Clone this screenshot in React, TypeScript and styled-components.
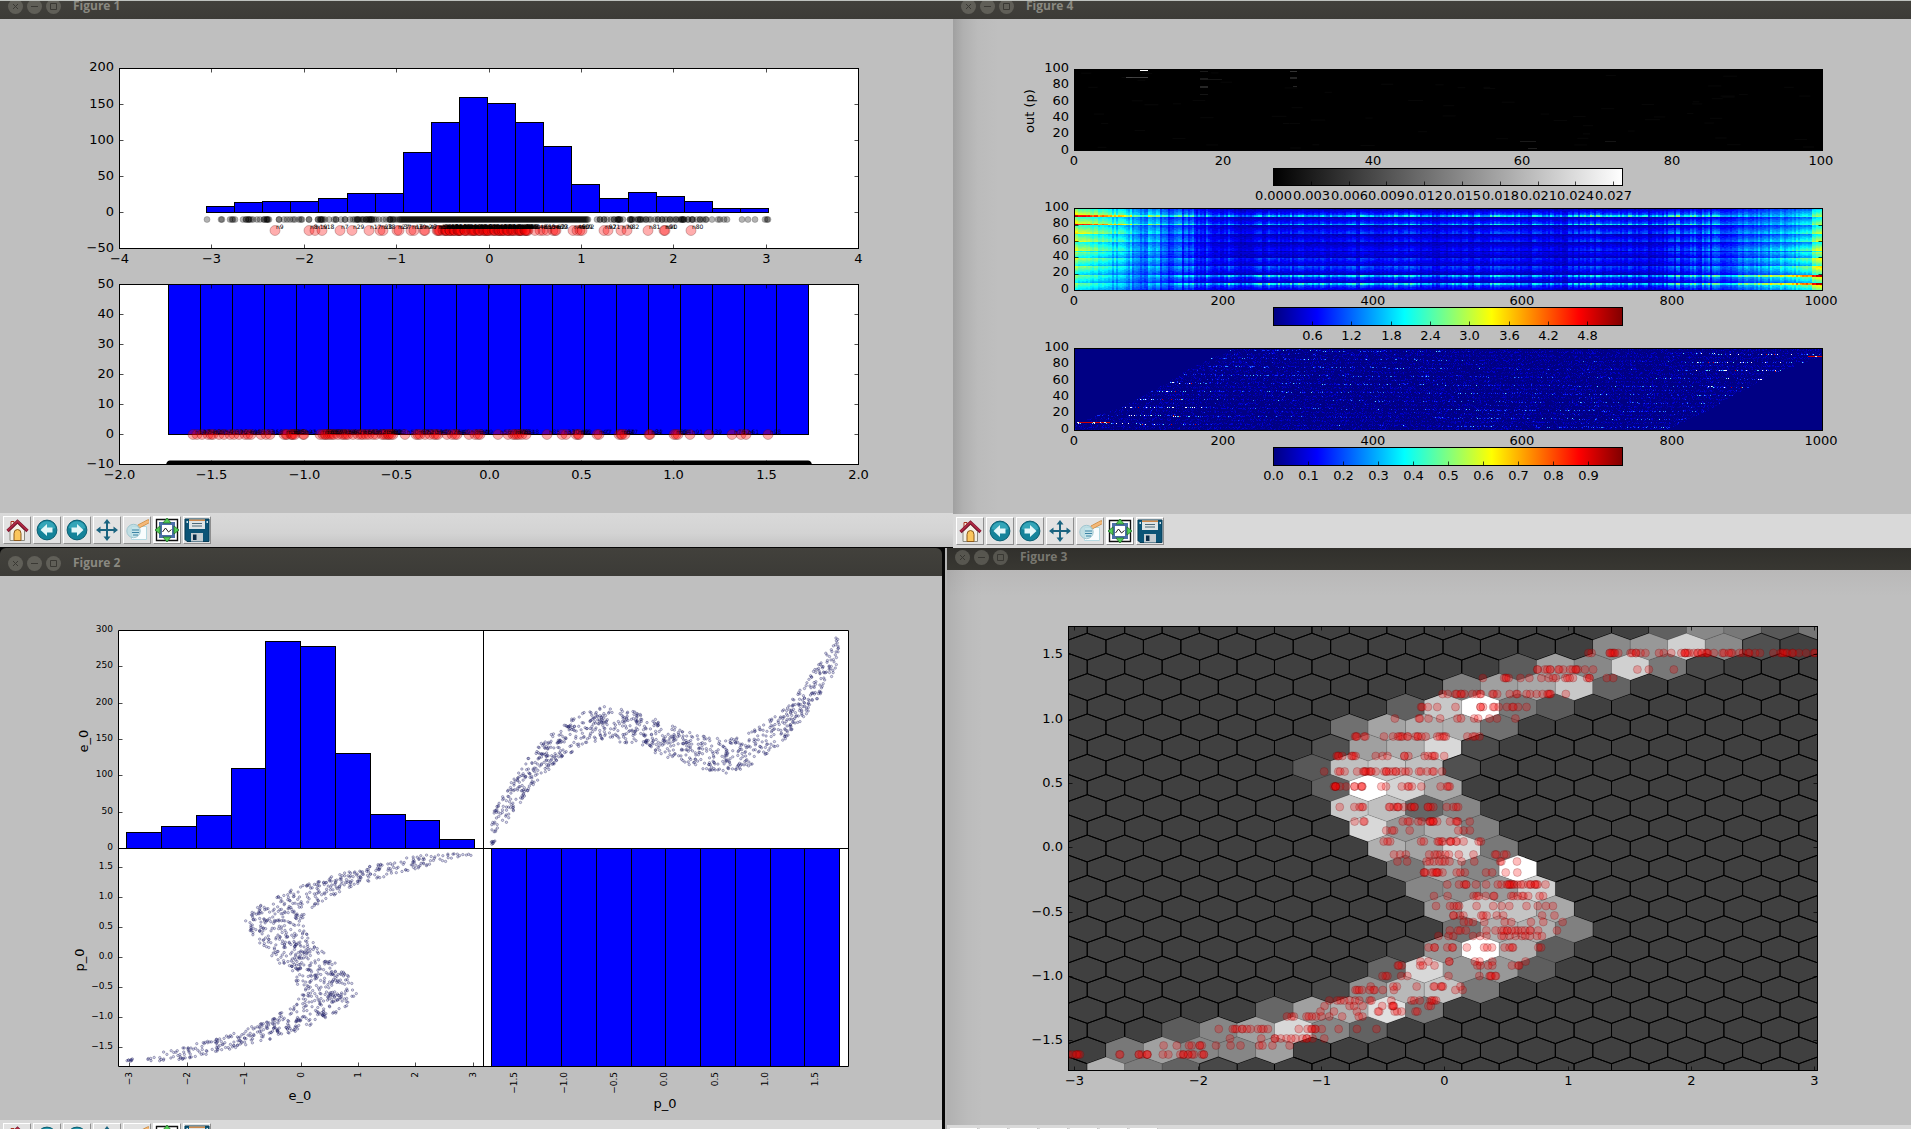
import React from 'react';
import styled, { createGlobalStyle } from 'styled-components';

const GlobalStyle = createGlobalStyle`
  * { box-sizing: border-box; }
  body { margin: 0; background: #000; overflow: hidden; }
`;

const Desktop = styled.main`
  display: flex;
  flex-direction: column;
  height: 100vh;
  overflow: hidden;
  background: #060606;
  font-family: 'DejaVu Sans', sans-serif;
`;

const TopRow = styled.div`
  display: grid;
  grid-template-columns: 953fr 958fr;
  align-items: start;
  flex: none;
  border-top: 1px solid #bfc3bf;
`;

const BottomRow = styled.div`
  display: grid;
  grid-template-columns: 942fr 966fr;
  align-items: start;
  gap: 3px;
  flex: 1;
  min-height: 0;
  overflow: hidden;
`;

const Frame = styled.section<{ $inset?: boolean }>`
  min-width: 0;
  padding-left: ${(p) => (p.$inset ? '2px' : '0')};
  background: ${(p) => (p.$inset ? '#b4b4b4' : 'transparent')};
`;

const TitleBar = styled.header<{ $height: number; $dim?: boolean; $round?: boolean }>`
  display: flex;
  align-items: flex-end;
  height: ${(p) => p.$height}px;
  overflow: hidden;
  border-radius: ${(p) => (p.$round ? '6px 6px 0 0' : '0')};
  background: ${(p) => (p.$dim ? 'linear-gradient(#31302c, #383732)' : 'linear-gradient(#42413c, #3c3b37)')};
`;

const TitleContent = styled.div<{ $dim?: boolean }>`
  display: flex;
  flex: none;
  align-items: center;
  gap: 4px;
  height: 26px;
  padding-left: 8px;
  opacity: ${(p) => (p.$dim ? 0.8 : 1)};
`;

const WindowButton = styled.button`
  display: block;
  width: 15px;
  height: 15px;
  padding: 0;
  border: 0;
  border-radius: 50%;
  background: #605f58;
  svg { display: block; }
`;

const Title = styled.h2`
  margin: 0 0 0 8px;
  font: 700 12px/16px 'Open Sans', sans-serif;
  color: #8a8981;
`;

type Shade = 'none' | 'left' | 'corner';
const shades: Record<Shade, string> = {
  none: '#bfbfbf',
  left: 'linear-gradient(90deg, #a0a0a0, #b0b0b0 10px, #bbb 25px, #bfbfbf 45px)',
  corner:
    'linear-gradient(90deg, rgba(0,0,0,.08), rgba(0,0,0,.02) 20px, transparent 36px), linear-gradient(#b9b8b8, #bfbfbf 26px)',
};

const Plot = styled.svg<{ $shade: Shade }>`
  display: block;
  width: 100%;
  height: auto;
  background: ${(p) => shades[p.$shade]};
  font-family: 'DejaVu Sans', sans-serif;
  font-size: 13px;
`;

const Toolbar = styled.div<{ $shadow?: boolean }>`
  display: flex;
  gap: 2px;
  height: 34px;
  padding: 3px;
  background: ${(p) => (p.$shadow ? 'linear-gradient(#d9d9d9, #d3d3d3 60%, #c4c4c4)' : '#d9d9d9')};
`;

const ToolButton = styled.button`
  display: flex;
  align-items: center;
  justify-content: center;
  width: 28px;
  height: 28px;
  padding: 0;
  border: 1px solid;
  border-color: #fff #8e8e8e #8e8e8e #fff;
  background: #e2e2e2;
  svg { flex: none; }
`;

/* ---------- numeric helpers ---------- */

function makeRandom(seed: number) {
  let s = seed;
  return () => {
    s = (s + 0x6d2b79f5) | 0;
    let t = Math.imul(s ^ (s >>> 15), 1 | s);
    t = (t + Math.imul(t ^ (t >>> 7), 61 | t)) ^ t;
    return ((t ^ (t >>> 14)) >>> 0) / 4294967296;
  };
}
const clamp = (v: number, lo = 0, hi = 1) => Math.max(lo, Math.min(hi, v));
const range = (n: number) => Array.from({ length: n }, (_, i) => i);

const LEVELS = 48;
function jet(v: number) {
  const c = (k: number) => Math.round(255 * clamp(1.5 - Math.abs(4 * v - k)));
  return `rgb(${c(3)},${c(2)},${c(1)})`;
}

/* ---------- manifold samples ---------- */

const CURVE = [[0, 0], [0.3, -0.32], [0.6, -0.5], [0.8, -0.34], [1, 0], [1.2, 0.5], [1.35, 0.98], [1.5, 1.6], [1.6, 2.05], [1.74, 2.7]];
function curve(p: number): number {
  const a = Math.abs(p);
  for (let i = 1; i < CURVE.length; i++) {
    const [x0, y0] = CURVE[i - 1];
    const [x1, y1] = CURVE[i];
    if (a <= x1) return Math.sign(p) * (y0 + ((y1 - y0) * (a - x0)) / (x1 - x0));
  }
  return 0;
}
const sampleRandom = makeRandom(11);
const SAMPLES = range(1000).map(() => {
  const p = (sampleRandom() * 2 - 1) * 1.73;
  const e = curve(p) + (sampleRandom() * 2 - 1) * 0.49;
  return { p, e: clamp(e, -3.05, 3.03) };
});

/* ---------- shared chart parts ---------- */

interface TickProps { at: number[]; labels: string[]; pos: number; size?: number }
const XLabels = ({ at, labels, pos, size = 13 }: TickProps) => (
  <g textAnchor="middle" fontSize={size}>
    {labels.map((l, i) => <text key={i} x={at[i]} y={pos}>{l}</text>)}
  </g>
);
const YLabels = ({ at, labels, pos, size = 13 }: TickProps) => (
  <g textAnchor="end" fontSize={size}>
    {labels.map((l, i) => <text key={i} x={pos} y={at[i] + (size > 10 ? 4 : 2)}>{l}</text>)}
  </g>
);
const UprightLabels = ({ at, labels, pos, size = 9 }: TickProps) => (
  <g textAnchor="end" fontSize={size}>
    {labels.map((l, i) => <text key={i} transform={`translate(${at[i] + 3} ${pos}) rotate(-90)`}>{l}</text>)}
  </g>
);
interface MarksProps { xs: number[]; ys: number[]; x0: number; x1: number; y0: number; y1: number; sides?: string }
const Marks = ({ xs, ys, x0, x1, y0, y1, sides = 'tblr' }: MarksProps) => {
  let d = '';
  xs.forEach((x) => {
    if (sides.includes('t')) d += `M${x} ${y0}v4`;
    if (sides.includes('b')) d += `M${x} ${y1}v-4`;
  });
  ys.forEach((y) => {
    if (sides.includes('l')) d += `M${x0} ${y}h4`;
    if (sides.includes('r')) d += `M${x1} ${y}h-4`;
  });
  return <path d={d} stroke="#000" strokeOpacity={0.7} fill="none" />;
};
const Bars = ({ edges, tops, base }: { edges: number[]; tops: number[]; base: number }) => (
  <g fill="#00f" stroke="#000">
    {tops.map((t, i) => <rect key={i} x={edges[i]} y={t} width={edges[i + 1] - edges[i]} height={base - t} />)}
  </g>
);

/* ---------- Figure 1 ---------- */

const HIST_TOPS = [206.5, 202.5, 201.5, 201.5, 198.5, 193.5, 193.5, 152.5, 122.5, 97.5, 103.5, 122.5, 146.5, 184.5, 198.5, 192.5, 196.5, 201.5, 208.5, 208.5];
const HIST_EDGES = range(21).map((i) => 206.5 + Math.round(i * 28.1));
const UNIFORM_EDGES = range(21).map((i) => 168.5 + i * 32);
const BLACK_LEFT = [207, 221, 222, 230, 232, 233, 235, 243, 246, 248, 249, 251, 253, 257, 260, 264, 266, 267, 268, 269, 279, 284, 287, 290, 293, 295, 299, 301, 302, 309, 318, 320, 321, 322, 323, 325, 329, 334, 336, 341, 345, 350, 353, 355, 357, 358, 359, 361, 363, 366, 367, 369, 370, 371, 372, 374, 376, 379, 383, 386, 389, 390, 391, 393, 395, 397];
const BLACK_RIGHT = [597, 600, 604, 607, 611, 614, 617, 618, 619, 620, 623, 630, 631, 632, 635, 638, 640, 641, 643, 646, 649, 651, 655, 658, 662, 665, 667, 670, 673, 676, 679, 681, 682, 683, 684, 688, 692, 693, 697, 700, 703, 706, 712, 718, 720, 724, 727, 742, 748, 755, 765, 767, 768];
const BLACK_DOTS = [...BLACK_LEFT, ...BLACK_LEFT.filter((x) => x > 245 && x % 3 === 0), ...range(190).map((i) => 399 + i), ...BLACK_RIGHT, ...BLACK_RIGHT.filter((x) => x < 710 && x % 2 === 0)];
const RED_SPARSE: [number, string][] = [[275, 'n9'], [309, 'n8'], [315, 'n19'], [322, 'n18'], [340, 'n7'], [352, 'n29'], [369, 'n17'], [380, 'n28'], [383, 'n38'], [397, 'n27'], [399, 'n37'], [411, 'n16'], [414, 'n39'], [424, 'n26'], [425, 'n47'], [573, 'n49'], [577, 'n60'], [580, 'n59'], [582, 'n72'], [604, 'n92'], [608, 'n71'], [621, 'n70'], [627, 'n82'], [648, 'n81'], [664, 'n91'], [665, 'n90'], [691, 'n80']];
const denseRandom = makeRandom(4);
const RED_DENSE: [number, string][] = range(74).map((i) => [435 + Math.round(i * 1.2) + Math.round(denseRandom() * 5), `n${10 + Math.floor(denseRandom() * 89)}`]);
const RED_UPPER: [number, string][] = [...RED_SPARSE, ...RED_DENSE, [525, 'n45'], [526, 'n58'], [527, 'n63'], [540, 'n61'], [543, 'n50'], [547, 'n54'], [553, 'n52'], [555, 'n69'], [556, 'n73'], [535, 'n48']];
const RED_LOWER = [193, 197, 202, 208, 211, 213, 219, 224, 230, 234, 239, 245, 248, 251, 261, 266, 270, 284, 286, 287, 291, 292, 293, 295, 303, 304, 320, 323, 325, 326, 328, 330, 332, 334, 338, 342, 344, 346, 348, 353, 358, 361, 363, 366, 369, 373, 376, 382, 384, 386, 388, 389, 391, 393, 405, 416, 418, 420, 425, 430, 434, 436, 438, 447, 452, 455, 457, 469, 475, 478, 480, 498, 508, 513, 515, 517, 519, 522, 526, 547, 562, 566, 576, 578, 579, 597, 599, 619, 621, 622, 625, 649, 650, 674, 676, 678, 690, 709, 732, 741, 746, 768];

const TOP_X = range(9).map((i) => 119.5 + Math.round(i * 92.375));
const FigureOne = () => (
  <Plot $shade="none" viewBox="0 19 953 494" role="img" aria-label="Histogram pair">
    <rect x={119.5} y={68.5} width={739} height={180} fill="#fff" />
    <Bars edges={HIST_EDGES} tops={HIST_TOPS} base={212.5} />
    <g fillOpacity={0.3} stroke="#000" strokeOpacity={0.2}>
      {BLACK_DOTS.map((x, i) => <circle key={i} cx={x} cy={219.5} r={3} />)}
    </g>
    <g fill="#f00" fillOpacity={0.32} stroke="#400" strokeOpacity={0.25}>
      {RED_UPPER.map(([x], i) => <circle key={i} cx={x} cy={230.5} r={5} />)}
    </g>
    <g fontSize={6}>
      {RED_UPPER.map(([x, l], i) => <text key={i} x={x + 1} y={229}>{l}</text>)}
    </g>
    <Marks xs={TOP_X} ys={[104.5, 140.5, 176.5, 212.5]} x0={119.5} x1={858.5} y0={68.5} y1={248.5} />
    <rect x={119.5} y={68.5} width={739} height={180} fill="none" stroke="#000" />
    <XLabels at={TOP_X} labels={['−4', '−3', '−2', '−1', '0', '1', '2', '3', '4']} pos={263} />
    <YLabels at={[67, 104, 140, 176, 212, 248]} labels={['200', '150', '100', '50', '0', '−50']} pos={114} />

    <rect x={119.5} y={284.5} width={739} height={180} fill="#fff" />
    <Bars edges={UNIFORM_EDGES} tops={range(20).map(() => 284.5)} base={434.5} />
    <g fill="#f00" fillOpacity={0.34} stroke="#400" strokeOpacity={0.25}>
      {RED_LOWER.map((x, i) => <circle key={i} cx={x} cy={434.5} r={5} />)}
    </g>
    <g fontSize={6} fillOpacity={0.7}>
      {RED_LOWER.map((x, i) => <text key={i} x={x + 2} y={434}>{`n${10 + ((i * 37) % 89)}`}</text>)}
    </g>
    <path d="M166 464.5q1-4 4-4h638q3 0 4 4z" />
    <Marks xs={TOP_X} ys={[314.5, 344.5, 374.5, 404.5, 434.5]} x0={119.5} x1={858.5} y0={284.5} y1={464.5} />
    <rect x={119.5} y={284.5} width={739} height={180} fill="none" stroke="#000" />
    <XLabels at={TOP_X} labels={['−2.0', '−1.5', '−1.0', '−0.5', '0.0', '0.5', '1.0', '1.5', '2.0']} pos={479} />
    <YLabels at={[284, 314, 344, 374, 404, 434, 464]} labels={['50', '40', '30', '20', '10', '0', '−10']} pos={114} />
  </Plot>
);

/* ---------- Figure 4 ---------- */

interface Layer { color: string; d: string }

function buildActivation(): Layer[] {
  const rnd = makeRandom(7);
  const cols = 374;
  const column = range(cols).map(() => rnd());
  const slow = range(cols).map((c) => 0.5 + 0.5 * Math.sin(c / 5) * Math.sin(c / 13 + 1));
  const paths: string[] = range(LEVELS).map(() => '');
  for (let y = 0; y < 82; y++) {
    const r = ((82 - y - 0.5) / 82) * 100;
    const upper = r > 47;
    let shape = 0;
    let block = 0;
    for (let j = -1; j < 10; j++) {
      const d = r - (8.8 + 10.25 * j);
      const g = upper ? (d >= -0.6 && d < 9 ? 1 - d / 9 : 0) : d <= 1 && d > -9 ? 1 + d / 9 : 0;
      if (g > shape) { shape = Math.min(1, g); block = j; }
    }
    const peak = shape > 0.82 ? 1 : 0;
    let run = -1;
    let start = 0;
    for (let c = 0; c <= cols; c++) {
      let level = -2;
      if (c < cols) {
        const u = c / cols;
        const n = column[c];
        const left = clamp(1 - u / 0.22);
        const right = Math.pow(clamp((u - 0.77) / 0.23), 1.1);
        const depth = 0.08 + 0.62 * clamp(Math.min(u, 1 - u) / 0.16);
        const damp = 1 - depth * n;
        const tiltL = 0.72 + 0.38 * (r / 100);
        const tiltR = 1.08 - 0.35 * (r / 100);
        let v = left * damp * tiltL * (2.2 + 1.2 * shape + (block > 6 && peak ? 1.3 : 0));
        v += right * damp * tiltR * (1.6 + 1.4 * shape + (block < 2 && peak ? 1.5 : 0));
        if (u > 0.985) v += 0.5;
        const mid = clamp((u - 0.08) / 0.15) * clamp((0.95 - u) / 0.15);
        const outer = Math.abs(block - 4) / 4;
        const bias = block < 4 ? 1.15 - 0.4 * u : 0.75 + 0.35 * u;
        const flick = 0.35 + 0.6 * (1 - n) + 0.35 * slow[c];
        v += mid * bias * flick * (0.1 + shape * (0.6 + 0.6 * outer) + (peak && outer > 0.6 ? 0.75 : 0));
        v += 0.15 + 0.14 * rnd();
        level = Math.round(clamp(v / 5.33) * (LEVELS - 1));
      }
      if (level !== run) {
        if (run >= 0) paths[run] += `M${1074 + start * 2} ${209.5 + y}h${(c - start) * 2}`;
        run = level;
        start = c;
      }
    }
  }
  return paths.map((d, i) => ({ color: jet(i / (LEVELS - 1)), d })).filter((l) => l.d);
}

const EDGE_POINTS = [[0, 8], [0.03, 19], [0.06, 28], [0.08, 38], [0.1, 48], [0.125, 60], [0.15, 75], [0.18, 88], [0.21, 101]];
function buildSpikes(): Layer[] {
  const rnd = makeRandom(21);
  const colors = ['#0000a4', '#0000d0', '#1030ff', '#3090ff', '#60e0ff', '#fff', '#d00000'];
  const out = colors.map(() => '');
  const edge = (u: number) => {
    const pts = EDGE_POINTS;
    for (let i = 1; i < pts.length; i++) {
      if (u <= pts[i][0]) return pts[i - 1][1] + ((pts[i][1] - pts[i - 1][1]) * (u - pts[i - 1][0])) / (pts[i][0] - pts[i - 1][0]);
    }
    return 101;
  };
  for (let y = 0; y < 81; y++) {
    for (let x = 0; x < 746; x += 1) {
      const u = x / 746;
      const r = ((81 - y) / 81) * 100;
      if (r > edge(u) || 100 - r > edge(1 - u)) continue;
      const lane = (((r - 8 + u * 7) % 10.2) + 10.2) % 10.2 < 1.3;
      const sub = (((r - 3 + u * 7) % 5.1) + 5.1) % 5.1 < 2.4;
      const margin = Math.min(edge(u) - r, r - (100 - edge(1 - u)));
      const strong = u < 0.5 ? r < 62 : r > 45;
      const nearEdge = strong && (u < 0.17 || u > 0.83) && margin < 32;
      const fade = u < 0.5 ? clamp(r / 70, 0.05, 1) : clamp((100 - r) / 70, 0.05, 1);
      const n = rnd();
      let k = -1;
      if (lane && nearEdge) {
        if (n < 0.03) k = 6;
        else if (n < 0.12) k = 5;
        else if (n < 0.19) k = 4;
        else if (n < 0.34) k = 2;
      } else if (lane) {
        if (n < 0.015 * fade) k = 4;
        else if (n < 0.08 * fade) k = 3;
        else if (n < 0.22 * fade) k = 2;
        else if (n < 0.36) k = 1;
      } else if (sub) {
        if (n < 0.02 * fade) k = 2;
        else if (n < 0.16) k = 1;
        else if (n < 0.4) k = 0;
      } else if (n < 0.04) k = 1;
      else if (n < 0.18) k = 0;
      if (k >= 0) out[k] += `M${1075 + x} ${349.5 + y}h1`;
    }
  }
  return colors.map((color, i) => ({ color, d: out[i] }));
}

const ACTIVATION = buildActivation();
const SPIKES = buildSpikes();
const Layers = ({ layers }: { layers: Layer[] }) => (
  <g fill="none" shapeRendering="crispEdges">
    {layers.map((l) => <path key={l.color} d={l.d} stroke={l.color} />)}
  </g>
);

const MAP_X = range(6).map((i) => 1074 + Math.round(i * 149.4));
const PERCENT = ['100', '80', '60', '40', '20', '0'];
const yTicks = (top: number) => range(6).map((i) => top + Math.round(i * 16.3));
const THOUSAND = ['0', '200', '400', '600', '800', '1000'];
const faintRandom = makeRandom(3);
const FAINT = range(70).map(() => ({ x: 1080 + faintRandom() * 730, y: 72 + faintRandom() * 76, w: 6 + faintRandom() * 9 }));

const ColorBar = ({ y, h, fill, ticks, labels }: { y: number; h: number; fill: string; ticks: number[]; labels: string[] }) => (
  <g>
    <rect x={1273.5} y={y} width={349} height={h} fill={`url(#${fill})`} stroke="#000" />
    <Marks xs={ticks} ys={[]} x0={0} x1={0} y0={y} y1={y + h} sides="b" />
    <XLabels at={ticks} labels={labels} pos={Math.ceil(y + h + 14)} />
  </g>
);

const FigureFour = () => (
  <Plot $shade="left" viewBox="953 19 958 495" role="img" aria-label="Activation maps">
    <defs>
      <linearGradient id="gray"><stop offset="0" stopColor="#000" /><stop offset="1" stopColor="#fff" /></linearGradient>
      <linearGradient id="jet">
        {range(17).map((i) => <stop key={i} offset={i / 16} stopColor={jet(i / 16)} />)}
      </linearGradient>
    </defs>
    <rect x={1074} y={69} width={749} height={82} fill="#000" />
    <g fill="#fff">
      <rect x={1140} y={70} width={8} height={1} />
      <rect x={1126} y={77} width={22} height={1} fillOpacity={0.25} />
      <rect x={1200} y={71} width={8} height={1} fillOpacity={0.1} />
      <rect x={1200} y={78} width={8} height={2} fillOpacity={0.1} />
      <rect x={1208} y={79} width={14} height={1} fillOpacity={0.08} />
      <rect x={1200} y={86} width={8} height={2} fillOpacity={0.15} />
      <rect x={1200} y={94} width={8} height={1} fillOpacity={0.08} />
      <rect x={1290} y={71} width={7} height={1} fillOpacity={0.2} />
      <rect x={1290} y={77} width={7} height={2} fillOpacity={0.14} />
      <rect x={1293} y={86} width={4} height={1} fillOpacity={0.15} />
      <rect x={1520} y={141} width={16} height={1} fillOpacity={0.1} />
      <rect x={1528} y={148} width={9} height={1} fillOpacity={0.12} />
      <rect x={1605} y={141} width={11} height={1} fillOpacity={0.08} />
      {FAINT.map((f, i) => <rect key={i} x={f.x} y={f.y} width={f.w} height={1} fillOpacity={0.03} />)}
    </g>
    <XLabels at={MAP_X} labels={['0', '20', '40', '60', '80', '100']} pos={165} />
    <YLabels at={yTicks(68)} labels={PERCENT} pos={1069} />
    <text textAnchor="middle" transform="translate(1034 111) rotate(-90)">out (p)</text>
    <ColorBar y={168.5} h={17} fill="gray" ticks={range(10).map((i) => 1273.5 + Math.round(i * 37.8))} labels={range(10).map((i) => (i * 0.003).toFixed(3))} />

    <Layers layers={ACTIVATION} />
    <rect x={1074.5} y={208.5} width={748} height={82} fill="none" stroke="#000" />
    <Marks xs={[]} ys={[225.5, 241.5, 257.5, 274.5]} x0={1074.5} x1={1822.5} y0={208.5} y1={290.5} />
    <XLabels at={MAP_X} labels={THOUSAND} pos={305} />
    <YLabels at={yTicks(207)} labels={PERCENT} pos={1069} />
    <ColorBar y={307.5} h={18} fill="jet" ticks={range(8).map((i) => 1312.5 + Math.round(i * 39.3))} labels={range(8).map((i) => ((i + 1) * 0.6).toFixed(1))} />

    <rect x={1074.5} y={348.5} width={748} height={82} fill="#000084" />
    <Layers layers={SPIKES} />
    <path d="M1077 422.5h33M1808 356.5h14" stroke="#d00000" />
    <path d="M1077 422.5h2M1093 422.5h2M1100 422.5h1M1104 422.5h2M1815 356.5h2" stroke="#e8f4e0" />
    <rect x={1074.5} y={348.5} width={748} height={82} fill="none" stroke="#000" />
    <XLabels at={MAP_X} labels={THOUSAND} pos={445} />
    <YLabels at={yTicks(347)} labels={PERCENT} pos={1069} />
    <ColorBar y={447.5} h={18} fill="jet" ticks={range(10).map((i) => 1273.5 + i * 35)} labels={range(10).map((i) => (i / 10).toFixed(1))} />
  </Plot>
);

/* ---------- Figure 2 ---------- */

const PAIR_EDGES = [126.5, 161.5, 196.5, 231.5, 265.5, 300.5, 335.5, 370.5, 405.5, 439.5, 474.5];
const PAIR_TOPS = [832.5, 826.5, 815.5, 768.5, 641.5, 646.5, 753.5, 814.5, 820.5, 839.5];
const PAIR_UNIFORM = [491.5, 526.5, 561.5, 596.5, 631.5, 665.5, 700.5, 735.5, 770.5, 804.5, 839.5];
const E_X = [129.5, 187.5, 244.5, 301.5, 358.5, 415.5, 473.5];
const P_Y = [867, 897, 927, 957, 987, 1017, 1047];
const P_X = [514, 564, 614, 664, 715, 765, 815];
const COUNT_Y = range(7).map((i) => 630 + Math.round(i * 36.3));

const FigureTwo = () => (
  <Plot $shade="none" viewBox="0 576 942 544" role="img" aria-label="Scatter matrix">
    <rect x={118.5} y={630.5} width={730} height={436} fill="#fff" />
    <Bars edges={PAIR_EDGES} tops={PAIR_TOPS} base={848.5} />
    <Bars edges={PAIR_UNIFORM} tops={range(10).map(() => 848.5)} base={1066.5} />
    <g fill="#5a5ac0" fillOpacity={0.25} stroke="#141446" strokeOpacity={0.36} strokeWidth={0.9}>
      {SAMPLES.map((s, i) => <circle key={`a${i}`} cx={301.5 + s.e * 57.2} cy={957.4 - s.p * 60} r={1.2} />)}
      {SAMPLES.map((s, i) => <circle key={`b${i}`} cx={665 + s.p * 100.5} cy={739.6 - s.e * 34.3} r={1.2} />)}
    </g>
    <Marks xs={[]} ys={COUNT_Y.slice(1, 6).map((y) => y + 0.5)} x0={118.5} x1={0} y0={0} y1={0} sides="l" />
    <Marks xs={E_X} ys={P_Y.map((y) => y + 0.5)} x0={118.5} x1={0} y0={0} y1={1066.5} sides="lb" />
    <path d="M118.5 630.5h730v436h-730zM483.5 630.5v436M118.5 848.5h730" fill="none" stroke="#000" />
    <YLabels at={COUNT_Y} labels={['300', '250', '200', '150', '100', '50', '0']} pos={113} size={9} />
    <YLabels at={P_Y} labels={['1.5', '1.0', '0.5', '0.0', '−0.5', '−1.0', '−1.5']} pos={113} size={9} />
    <UprightLabels at={E_X.map((x) => x - 0.5)} labels={['−3', '−2', '−1', '0', '1', '2', '3']} pos={1072} />
    <UprightLabels at={P_X} labels={['−1.5', '−1.0', '−0.5', '0.0', '0.5', '1.0', '1.5']} pos={1072} />
    <g textAnchor="middle">
      <text transform="translate(88 741) rotate(-90)">e_0</text>
      <text transform="translate(84 960) rotate(-90)">p_0</text>
      <text x={300} y={1100}>e_0</text>
      <text x={665} y={1108}>p_0</text>
    </g>
  </Plot>
);

/* ---------- Figure 3 ---------- */

/* Per row from the top: index of the first filled cell, then grey levels. */
const HEX_ROWS: [number, string][] = [
  [16, '60 88 78 58 75'], [14, '8a 98 d0 8a 50 42'], [12, '5c a0 88 d0 78 48'], [10, '80 a0 a8 c8 64'],
  [9, '60 c8 ff 78 5a'], [7, '70 a4 b0 b0 70'], [7, '50 a0 b0 d8 4c'], [6, '58 c0 c8 c0 50'],
  [7, '60 ff d4 a8'], [7, 'c8 c0 66 86'], [8, 'd8 98 b0 80'], [8, 'b0 a4 d8 78'],
  [9, '78 a8 86 ff'], [9, '86 90 9a d0'], [10, '98 c8 c4 a8'], [10, '74 b0 b0 80'],
  [9, '4a 98 ff b0 5e'], [8, '66 d8 98 98 5e'], [7, '4a 90 b8 c4 78'], [5, '66 a0 b0 e0 78'],
  [3, '5c 86 a0 d8 86 62'], [1, '78 a0 86 86 a0'], [1, 'b0 7c 62 48'],
];
const HEX_W = 37.45;
const HEX_V = 20.18;
const HEXES = range(23).flatMap((row) =>
  range(21).map((i) => {
    const [first, levels] = HEX_ROWS[row];
    const level = levels.split(' ')[i - first];
    return { x: 1068.5 + HEX_W * (i + (row % 2 ? 0.5 : 0)), y: 626.5 + HEX_V * row, level };
  }),
);
const hexPath = (x: number, y: number) =>
  `M${x} ${y - 13.45}l${HEX_W / 2} 6.73v13.45l${-HEX_W / 2} 6.73l${-HEX_W / 2} -6.73v-13.45z`;
const EMPTY = HEXES.filter((h) => !h.level);
const FILLED = HEXES.filter((h) => h.level);
const NODE_Y = [653, 669.5, 678, 694, 707, 718.5, 736.5, 756, 771.5, 786.5, 807, 821.5, 830.5, 841.5, 854.5, 861.5, 872.5, 884.5, 896, 906, 915.5, 922, 930.5, 936, 947.5, 961.5, 965.5, 976, 986.5, 990, 1000.5, 1006, 1011.5, 1016.5, 1029, 1038.5, 1045.5, 1054.5];
const NODES = SAMPLES.slice(0, 660).map((s) => {
  const y = 848.3 - s.p * 128.8;
  return { x: 1444.5 + s.e * 123.3, y: NODE_Y.reduce((b, c) => (Math.abs(c - y) < Math.abs(b - y) ? c : b)) };
});
const EXTRA_NODES = [1783, 1787, 1793, 1799, 1806, 1814, 1815].map((x) => ({ x, y: 653 }));
const HEX_X = [1074.5, 1198.5, 1321.5, 1444.5, 1568.5, 1691.5, 1814.5];
const HEX_Y = [654, 719, 783, 847, 912, 976, 1040];

const FigureThree = () => (
  <Plot $shade="corner" viewBox="947 570 964 555" role="img" aria-label="Hexagonal density">
    <clipPath id="hexArea"><rect x={1068.5} y={626.5} width={749} height={444} /></clipPath>
    <g clipPath="url(#hexArea)">
      <rect x={1068} y={626} width={750} height={445} fill="#404040" />
      <path d={EMPTY.map((h) => hexPath(h.x, h.y)).join('')} fill="#404040" stroke="#000" />
      {FILLED.map((h, i) => <path key={i} d={hexPath(h.x, h.y)} fill={`#${h.level}${h.level}${h.level}`} stroke="#000" strokeOpacity={parseInt(h.level, 16) < 84 ? 0.7 : 0.1} />)}
      <g fill="#f00" fillOpacity={0.26} stroke="#600" strokeOpacity={0.22}>
        {[...NODES, ...EXTRA_NODES].map((n, i) => <circle key={i} cx={n.x} cy={n.y} r={4} />)}
      </g>
    </g>
    <Marks xs={HEX_X} ys={HEX_Y.map((y) => y + 0.5)} x0={1068.5} x1={1817.5} y0={626.5} y1={1070.5} />
    <rect x={1068.5} y={626.5} width={749} height={444} fill="none" stroke="#000" />
    <XLabels at={HEX_X} labels={['−3', '−2', '−1', '0', '1', '2', '3']} pos={1085} />
    <YLabels at={HEX_Y} labels={['1.5', '1.0', '0.5', '0.0', '−0.5', '−1.0', '−1.5']} pos={1063} />
  </Plot>
);

/* ---------- toolbar icons ---------- */

const HomeIcon = () => (
  <svg width="24" height="24" viewBox="0 0 24 24">
    <path d="M6 3.5h3v6H6z" fill="#f6efe4" stroke="#a8321e" />
    <path d="M5 12.5 12.5 5l7 7.5v10H5z" fill="#f3f0e6" stroke="#8a8a80" />
    <path d="M9 22.5v-7q0-4 3.5-4t3.5 4v7z" fill="#fbc65c" stroke="#8c5a1c" />
    <path d="M2.5 13 12.5 3.5 22.5 13" fill="none" stroke="#7c1830" strokeWidth="3.2" />
    <path d="M2.5 12.6 12.5 3.2l10 9.4" fill="none" stroke="#b52a45" strokeWidth="1.4" />
  </svg>
);
const ArrowIcon = ({ back }: { back?: boolean }) => (
  <svg width="24" height="24" viewBox="0 0 24 24">
    <circle cx="12" cy="12" r="9.9" fill="#15839a" stroke="#0b5f73" />
    <path d="M3.5 10a8.7 8.7 0 0 1 17 0q-8 3-17 0z" fill="#3fb0c2" opacity=".75" />
    <path d={back ? 'M5.5 12l6.5-6v3.5h5.5v5H12V18z' : 'M18.5 12 12 6v3.5H6.5v5H12V18z'} fill="#e4f6f8" />
  </svg>
);
const PanIcon = () => (
  <svg width="24" height="24" viewBox="0 0 24 24">
    <path d="M12 3v18M3 12h18" stroke="#1b6480" strokeWidth="2" />
    <path d="M12 1l3.5 4.5h-7zM12 23l3.5-4.5h-7zM1 12l4.5-3.5v7zM23 12l-4.5-3.5v7z" fill="#1b6480" />
  </svg>
);
const ZoomIcon = () => (
  <svg width="24" height="24" viewBox="0 0 24 24">
    <path d="M6.5 8.5h15v13h-15z" fill="#f8fcfd" stroke="#b4d8e0" />
    <path d="M14.5 8 23 3.5" stroke="#c8863a" strokeWidth="4.2" strokeLinecap="round" />
    <path d="M14.5 8 23 3.5" stroke="#f4b878" strokeWidth="2.6" strokeLinecap="round" />
    <circle cx="8.5" cy="13" r="6.7" fill="#b9dde4" fillOpacity=".8" stroke="#a0c6d0" />
    <path d="M7 12h7M7 14.5h7M8 17h5" stroke="#3b83a4" />
  </svg>
);
const SubplotsIcon = () => (
  <svg width="26" height="26" viewBox="0 0 26 26">
    <path d="M0 0h26v26H0z" fill="#fff" />
    <path d="M2.5 2.5h21v21h-21z" fill="#fff" stroke="#111" strokeWidth="1.4" />
    <path d="M6.5 6.5h13v13h-13z" fill="#fff" stroke="#4c6fa8" strokeWidth="3" />
    <path d="M8.5 15l3-4 3 4 3-2.5" fill="none" stroke="#222" />
    <path d="M13 1l4 5H9zM13 25l4-5H9zM1 13l5-4v8zM25 13l-5-4v8z" fill="#55cf55" stroke="#1d6e28" strokeWidth=".8" />
  </svg>
);
const SaveIcon = () => (
  <svg width="26" height="26" viewBox="0 0 26 26">
    <path d="M1 2h24v22.5H3L1 22.5z" fill="#0b5476" stroke="#073c56" />
    <path d="M5 2.5h16V12H5z" fill="#dfe5e6" />
    <path d="M5 2.5h16V4H5z" fill="#d08a4c" />
    <path d="M8 6.5h10M8 9h10" stroke="#4d6a78" />
    <path d="M7 16h12v8.5H7z" fill="#c4cdd1" />
    <path d="M9 17.5h3.5V23H9z" fill="#0a2c48" />
    <path d="M2.5 4H4v2H2.5zM22.5 4H24v2h-1.5z" fill="#cfe2ea" />
  </svg>
);

const TOOLS: [string, React.ReactNode][] = [
  ['Home', <HomeIcon />],
  ['Back', <ArrowIcon back />],
  ['Forward', <ArrowIcon />],
  ['Pan', <PanIcon />],
  ['Zoom', <ZoomIcon />],
  ['Subplots', <SubplotsIcon />],
  ['Save', <SaveIcon />],
];

/* ---------- windows ---------- */

interface FigureWindowProps {
  title: string;
  barHeight: number;
  dim?: boolean;
  round?: boolean;
  inset?: boolean;
  shadow?: boolean;
  children: React.ReactNode;
}

const CONTROLS: [string, string][] = [
  ['Close', 'M5 5l5 5M10 5l-5 5'],
  ['Minimize', 'M4 7.5h7'],
  ['Maximize', 'M4.5 4.5h6v6h-6z'],
];

const FigureWindow = ({ title, barHeight, dim, round, inset, shadow, children }: FigureWindowProps) => (
  <Frame $inset={inset}>
    <TitleBar $height={barHeight} $dim={dim} $round={round}>
      <TitleContent $dim={dim}>
        {CONTROLS.map(([name, d]) => (
          <WindowButton key={name} aria-label={name}>
            <svg width="15" height="15" viewBox="0 0 15 15"><path d={d} fill="none" stroke="#3a3934" /></svg>
          </WindowButton>
        ))}
        <Title>{title}</Title>
      </TitleContent>
    </TitleBar>
    {children}
    <Toolbar $shadow={shadow}>
      {TOOLS.map(([name, icon]) => <ToolButton key={name} aria-label={name}>{icon}</ToolButton>)}
    </Toolbar>
  </Frame>
);

export default function App() {
  return (
    <>
      <GlobalStyle />
      <Desktop>
        <TopRow>
          <FigureWindow title="Figure 1" barHeight={18} shadow><FigureOne /></FigureWindow>
          <FigureWindow title="Figure 4" barHeight={18}><FigureFour /></FigureWindow>
        </TopRow>
        <BottomRow>
          <FigureWindow title="Figure 2" barHeight={28} round><FigureTwo /></FigureWindow>
          <FigureWindow title="Figure 3" barHeight={22} dim inset><FigureThree /></FigureWindow>
        </BottomRow>
      </Desktop>
    </>
  );
}
